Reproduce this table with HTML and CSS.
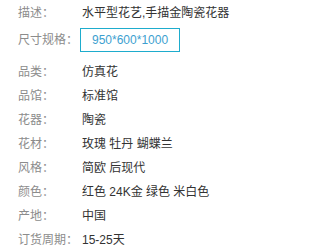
FILE: index.html
```html
<!DOCTYPE html>
<html lang="zh-CN">
<head>
    <meta charset="UTF-8">
    <meta name="viewport" content="width=device-width, initial-scale=1.0">
    <title>商品参数</title>
    <link rel="stylesheet" href="styles.css">
</head>
<body>
    <div class="params">
        <div class="row">
            <span class="label">描述：</span>
            <span class="value">水平型花艺,手描金陶瓷花器</span>
        </div>
        <div class="row size">
            <span class="label">尺寸规格：</span>
            <span class="size-box">950*600*1000</span>
        </div>
        <div class="row">
            <span class="label">品类：</span>
            <span class="value">仿真花</span>
        </div>
        <div class="row">
            <span class="label">品馆：</span>
            <span class="value">标准馆</span>
        </div>
        <div class="row">
            <span class="label">花器：</span>
            <span class="value">陶瓷</span>
        </div>
        <div class="row">
            <span class="label">花材：</span>
            <span class="value">玫瑰 牡丹 蝴蝶兰</span>
        </div>
        <div class="row">
            <span class="label">风格：</span>
            <span class="value">简欧 后现代</span>
        </div>
        <div class="row">
            <span class="label">颜色：</span>
            <span class="value">红色 24K金 绿色 米白色</span>
        </div>
        <div class="row">
            <span class="label">产地：</span>
            <span class="value">中国</span>
        </div>
        <div class="row">
            <span class="label">订货周期：</span>
            <span class="value">15-25天</span>
        </div>
    </div>
</body>
</html>
```

FILE: styles.css
```css
* {
    margin: 0;
    padding: 0;
    box-sizing: border-box;
}

body {
    background: #fff;
    font-family: "Liberation Sans", "Noto Sans CJK SC", sans-serif;
    font-size: 12px;
}

.params {
    padding: 1px 0 0 18px;
}

.row {
    display: flex;
    align-items: center;
    line-height: 24px;
}

.label {
    width: 64px;
    flex-shrink: 0;
    color: #8c8c8c;
}

.value {
    color: #333;
}

.row.size {
    margin: 3px 0 8px;
}

.size-box {
    margin-left: -2px;
    padding: 0 11px;
    line-height: 22px;
    border: 1px solid #1eaccd;
    color: #3d9fd0;
}
```
